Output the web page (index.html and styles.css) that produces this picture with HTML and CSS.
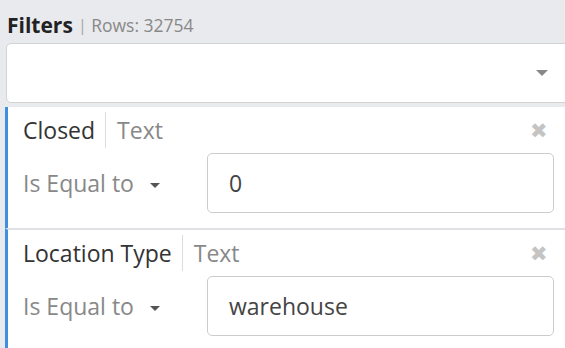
FILE: index.html
```html
<!DOCTYPE html>
<html>
<head>
<meta charset="utf-8">
<link rel="stylesheet" href="styles.css">
</head>
<body>
<div class="panel">
  <div class="head"><span class="title">Filters</span><span class="bar">|</span><span class="rows">Rows: 32754</span></div>
  <div class="select"><span class="caret big"></span></div>
  <div class="filter">
    <div class="row1">
      <span class="name">Closed</span><span class="type">Text</span>
      <span class="close">&#x2716;</span>
    </div>
    <div class="row2">
      <span class="op">Is Equal to <span class="caret"></span></span>
      <div class="input">0</div>
    </div>
  </div>
  <div class="filter">
    <div class="row1">
      <span class="name">Location Type</span><span class="type">Text</span>
      <span class="close">&#x2716;</span>
    </div>
    <div class="row2">
      <span class="op">Is Equal to <span class="caret"></span></span>
      <div class="input">warehouse</div>
    </div>
  </div>
</div>
</body>
</html>
```

FILE: styles.css
```css
html, body {
  margin: 0;
  padding: 0;
}
body {
  width: 565px;
  height: 348px;
  overflow: hidden;
  background: #e9eaed;
  font-family: "Open Sans", "Noto Sans", sans-serif;
  color: #333;
}
.panel {
  width: 580px;
  padding-left: 5px;
}
.head {
  height: 43px;
  display: flex;
  align-items: center;
  padding-left: 2px;
  padding-top: 6px;
  box-sizing: border-box;
}
.title {
  font-weight: 700;
  font-size: 21px;
  color: #222;
}
.bar {
  color: #aaa;
  font-size: 17px;
  margin: 0 4px 0 5px;
}
.rows {
  color: #888;
  font-size: 17.5px;
}
.select {
  margin-left: 1px;
  height: 60px;
  background: #fff;
  border: 1px solid #d3d3d3;
  border-radius: 5px;
  box-sizing: border-box;
  display: flex;
  align-items: center;
  justify-content: flex-end;
  padding-right: 36px;
}
.caret {
  display: inline-block;
  width: 0;
  height: 0;
  border-left: 5px solid transparent;
  border-right: 5px solid transparent;
  border-top: 5px solid #555;
  vertical-align: middle;
  margin-left: 10px;
}
.caret.big {
  border-left-width: 6px;
  border-right-width: 6px;
  border-top-width: 6px;
  border-top-color: #888;
}
.filter {
  margin-top: 4px;
  background: #fff;
  border-left: 3px solid #3f8ee0;
  padding: 5px 31px 15px 15px;
  box-sizing: border-box;
}
.filter + .filter {
  margin-top: 0;
  border-top: 2px solid #e0e1e4;
}
.row1 {
  height: 36px;
  display: flex;
  align-items: center;
  font-size: 23px;
}
.name {
  color: #333;
  padding-right: 10px;
  border-right: 1px solid #ddd;
  line-height: 36px;
}
.type {
  color: #888;
  padding-left: 11px;
}
.close {
  margin-left: auto;
  margin-right: 6px;
  color: #c4c4c4;
  font-size: 21px;
}
.row2 {
  margin-top: 5px;
  display: flex;
  align-items: center;
}
.op {
  width: 184px;
  flex: none;
  color: #888;
  font-size: 23px;
}
.input {
  flex: 1;
  height: 60px;
  border: 1px solid #ccc;
  border-radius: 5px;
  box-sizing: border-box;
  display: flex;
  align-items: center;
  padding-left: 21px;
  font-size: 23px;
  color: #444;
}
```
